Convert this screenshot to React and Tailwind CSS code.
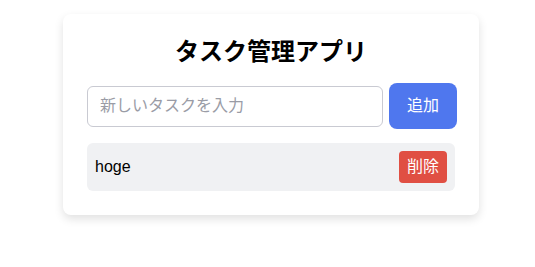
import React, { useState } from "react";

export default function App() {
  const [tasks, setTasks] = useState(["hoge"]);
  const [text, setText] = useState("");

  const addTask = () => {
    if (!text.trim()) return;
    setTasks([...tasks, text.trim()]);
    setText("");
  };

  return (
    <div className="min-h-screen bg-white pt-[14px] pl-[63px] font-['Liberation_Sans','Noto_Sans_CJK_JP',sans-serif]">
      <div className="w-[416px] rounded-lg bg-white px-6 pt-6 pb-6 shadow-[0_4px_10px_rgba(0,0,0,0.12)]">
        <h1 className="mb-[17px] text-center text-2xl font-bold leading-[28px] text-black">
          タスク管理アプリ
        </h1>

        <div className="flex w-[370px] items-center gap-[6px]">
          <input
            value={text}
            onChange={(e) => setText(e.target.value)}
            placeholder="新しいタスクを入力"
            className="h-[41px] min-w-0 flex-1 rounded-md border border-[#c9cad2] px-3 text-base text-black placeholder:text-[#9a9ca6] outline-none"
          />
          <button
            onClick={addTask}
            className="h-[46px] w-[68px] rounded-lg bg-[#4f77ee] text-base text-white"
          >
            追加
          </button>
        </div>

        <ul className="mt-[14px] flex flex-col gap-2">
          {tasks.map((t, i) => (
            <li
              key={i}
              className="flex h-12 items-center justify-between rounded-md bg-[#f0f1f3] pl-2 pr-2"
            >
              <span className="text-base text-black">{t}</span>
              <button
                onClick={() => setTasks(tasks.filter((_, j) => j !== i))}
                className="h-8 w-12 rounded bg-[#e04f43] text-base text-white"
              >
                削除
              </button>
            </li>
          ))}
        </ul>
      </div>
    </div>
  );
}
